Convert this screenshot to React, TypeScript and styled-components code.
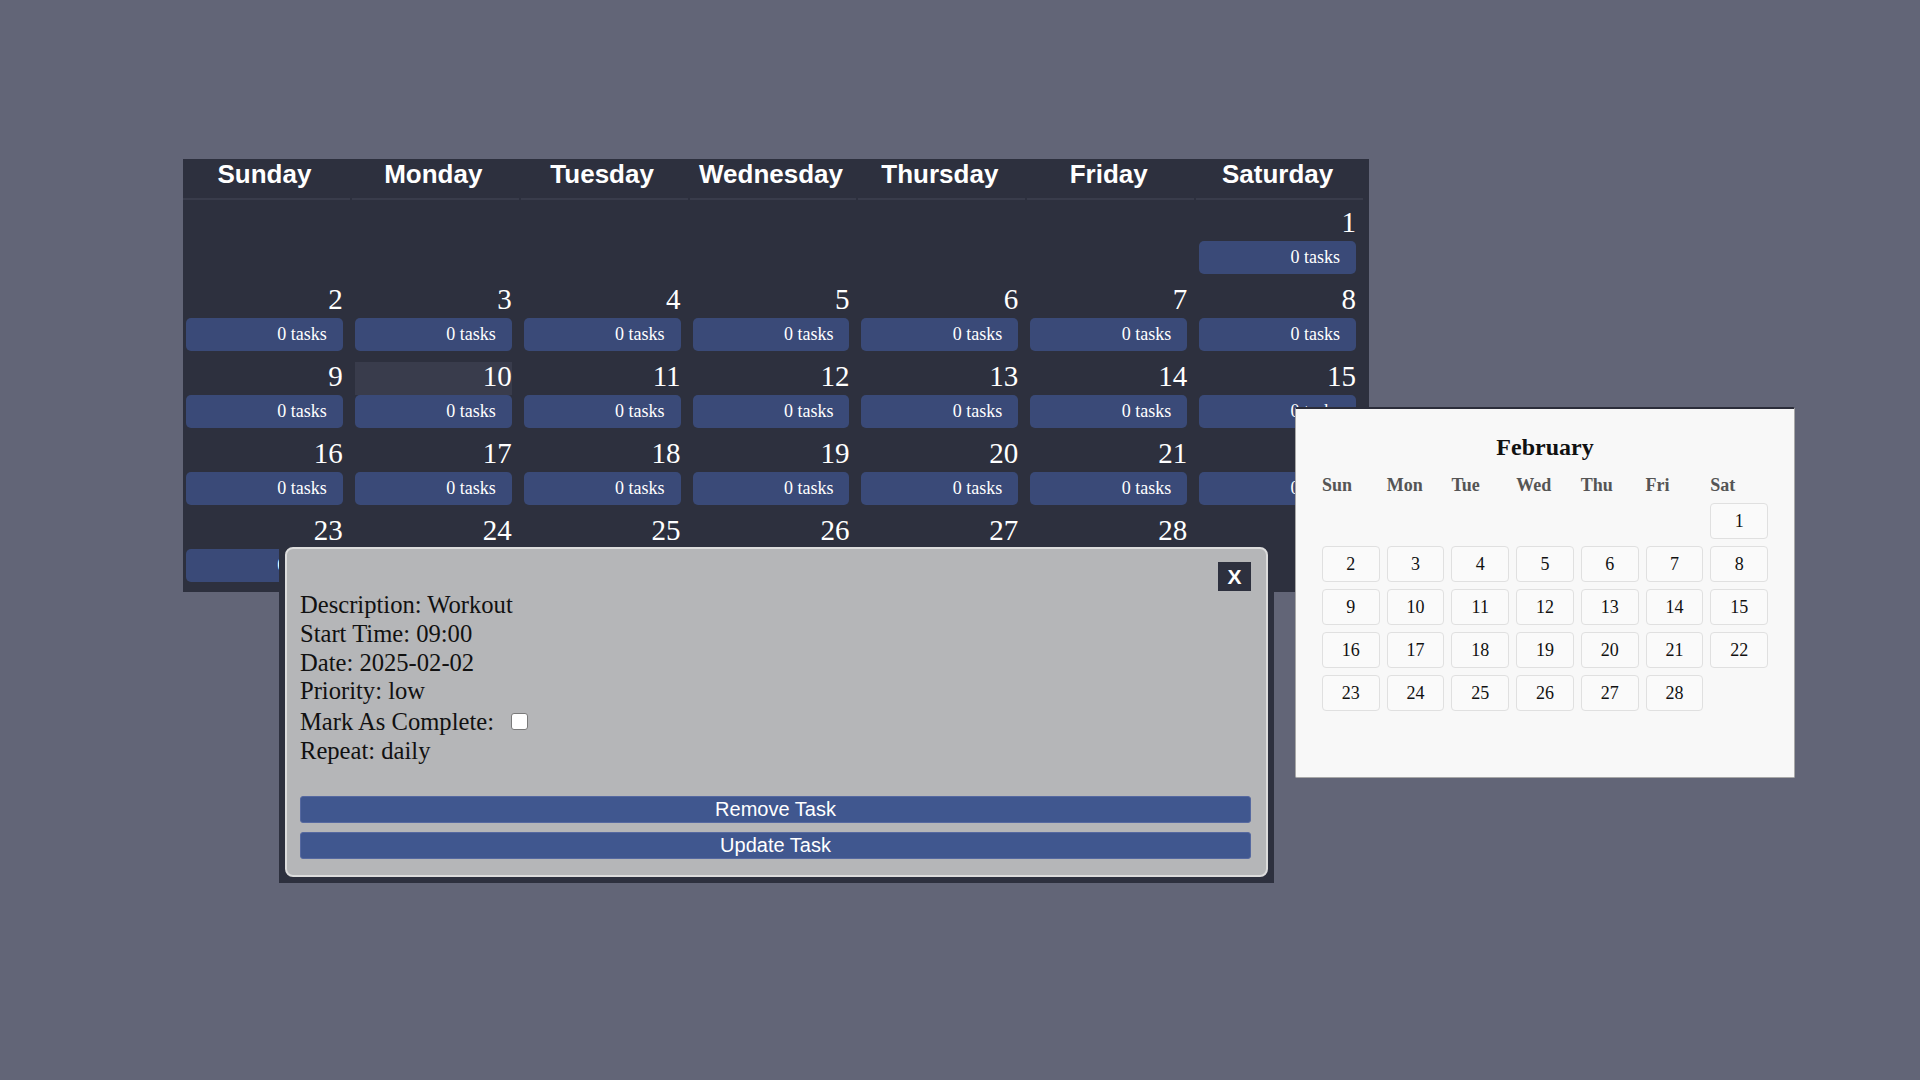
import React from 'react';
import styled, { createGlobalStyle } from 'styled-components';

const GlobalStyle = createGlobalStyle`
  html, body {
    margin: 0;
    padding: 0;
    background: #626577;
  }
  body {
    font-family: "Liberation Serif", "Times New Roman", serif;
  }
  * { box-sizing: border-box; }
`;

const Page = styled.div`
  min-height: 1080px;
  padding: 159px 0 0 183px;
`;

const Stage = styled.div`
  position: relative;
  width: 1186px;
`;

const CalendarGrid = styled.div`
  background: #2d303e;
  display: grid;
  grid-template-columns: repeat(7, 1fr);
  column-gap: 2px;
  padding: 0 6px 7px 0;
`;

const HeaderCell = styled.div`
  font-family: "Liberation Sans", Arial, sans-serif;
  font-weight: bold;
  font-size: 26px;
  line-height: 30px;
  color: #ffffff;
  text-align: center;
  padding: 0 7px 9px 3px;
  border-bottom: 2px solid #393c4b;
`;

const DayCell = styled.div`
  padding: 8px 7px 3px 3px;
  min-height: 77px;
`;

const DayNumber = styled.div<{ $today?: boolean }>`
  font-size: 29px;
  line-height: 29px;
  padding-bottom: 4px;
  color: #ffffff;
  text-align: right;
  background: ${(p) => (p.$today ? '#393c4c' : 'transparent')};
`;

const TaskButton = styled.button`
  display: block;
  width: 100%;
  padding: 6px 16px;
  border: none;
  border-radius: 5px;
  background: #3a4a78;
  color: #ffffff;
  font-family: "Liberation Serif", "Times New Roman", serif;
  font-size: 18px;
  line-height: 21px;
  text-align: right;
  cursor: pointer;
`;

const ModalFrame = styled.div`
  position: absolute;
  left: 96px;
  top: 382px;
  width: 995px;
  padding: 6px 6px 6px 6px;
  background: #2d303e;
  z-index: 2;
`;

const ModalBox = styled.div`
  background: #b5b6b8;
  border: 2px solid #dcdcdc;
  border-radius: 8px;
  padding: 13px 15px 16px 13px;
  display: flex;
  flex-direction: column;
`;

const CloseRow = styled.div`
  display: flex;
  justify-content: flex-end;
`;

const CloseButton = styled.button`
  width: 33px;
  height: 29px;
  padding: 0;
  border: none;
  background: #2d303e;
  color: #ffffff;
  font-family: "Liberation Sans", Arial, sans-serif;
  font-weight: bold;
  font-size: 21px;
  line-height: 29px;
  cursor: pointer;
`;

const InfoLine = styled.div`
  font-size: 24.6px;
  line-height: 28.75px;
  color: #111111;
`;

const CheckLine = styled(InfoLine)`
  display: flex;
  align-items: center;
  height: 31px;
  padding-top: 1px;
`;

const CheckBox = styled.input`
  appearance: none;
  width: 17px;
  height: 17px;
  margin: 0 0 2px 17px;
  background: #ffffff;
  border: 1px solid #7a7a7a;
  border-radius: 3px;
`;

const Actions = styled.div`
  margin-top: 30px;
  display: flex;
  flex-direction: column;
  gap: 9px;
`;

const ActionButton = styled.button`
  display: block;
  width: 100%;
  height: 27px;
  padding: 0;
  border: 1px solid #5669a0;
  border-radius: 3px;
  background: #40578f;
  color: #ffffff;
  font-family: "Liberation Sans", Arial, sans-serif;
  font-size: 20px;
  line-height: 25px;
  text-align: center;
  cursor: pointer;
`;

const Picker = styled.div`
  position: absolute;
  left: 1112px;
  top: 248px;
  width: 500px;
  height: 371px;
  background: #f8f8f8;
  border: 1px solid #a8a8a8;
  border-top: 2px solid #2b2d3a;
  border-radius: 2px;
  padding: 24px 26px 0 26px;
  z-index: 2;
`;

const PickerTitle = styled.div`
  font-weight: bold;
  font-size: 24px;
  line-height: 28px;
  text-align: center;
  color: #111111;
`;

const PickerGrid = styled.div`
  display: grid;
  grid-template-columns: repeat(7, 1fr);
  column-gap: 7px;
  row-gap: 7px;
`;

const WeekRow = styled(PickerGrid)`
  margin-top: 14px;
  margin-bottom: 7px;
`;

const WeekLabel = styled.div`
  font-weight: bold;
  font-size: 18px;
  line-height: 21px;
  color: #555555;
  text-align: left;
`;

const PickerDay = styled.div<{ $empty?: boolean }>`
  height: 36px;
  border: 1px solid ${(p) => (p.$empty ? 'transparent' : '#e0e0e0')};
  border-radius: 4px;
  background: ${(p) => (p.$empty ? 'transparent' : '#fafafa')};
  font-size: 18px;
  line-height: 34px;
  text-align: center;
  color: #111111;
`;

const WEEKDAYS = ['Sunday', 'Monday', 'Tuesday', 'Wednesday', 'Thursday', 'Friday', 'Saturday'];
const SHORT = ['Sun', 'Mon', 'Tue', 'Wed', 'Thu', 'Fri', 'Sat'];
const LEAD = 6;
const DAYS = 28;

const cells: (number | null)[] = [
  ...Array.from({ length: LEAD }, () => null),
  ...Array.from({ length: DAYS }, (_, i) => i + 1),
];
while (cells.length % 7 !== 0) cells.push(null);

export default function App() {
  return (
    <>
      <GlobalStyle />
      <Page>
        <Stage>
          <CalendarGrid>
            {WEEKDAYS.map((d) => (
              <HeaderCell key={d}>{d}</HeaderCell>
            ))}
            {cells.map((day, i) => (
              <DayCell key={i}>
                {day !== null && (
                  <>
                    <DayNumber $today={day === 10}>{day}</DayNumber>
                    <TaskButton>0 tasks</TaskButton>
                  </>
                )}
              </DayCell>
            ))}
          </CalendarGrid>

          <ModalFrame>
            <ModalBox>
              <CloseRow>
                <CloseButton>X</CloseButton>
              </CloseRow>
              <InfoLine>Description: Workout</InfoLine>
              <InfoLine>Start Time: 09:00</InfoLine>
              <InfoLine>Date: 2025-02-02</InfoLine>
              <InfoLine>Priority: low</InfoLine>
              <CheckLine>
                Mark As Complete:
                <CheckBox type="checkbox" />
              </CheckLine>
              <InfoLine>Repeat: daily</InfoLine>
              <Actions>
                <ActionButton>Remove Task</ActionButton>
                <ActionButton>Update Task</ActionButton>
              </Actions>
            </ModalBox>
          </ModalFrame>

          <Picker>
            <PickerTitle>February</PickerTitle>
            <WeekRow>
              {SHORT.map((d) => (
                <WeekLabel key={d}>{d}</WeekLabel>
              ))}
            </WeekRow>
            <PickerGrid>
              {cells.map((day, i) => (
                <PickerDay key={i} $empty={day === null}>
                  {day ?? ''}
                </PickerDay>
              ))}
            </PickerGrid>
          </Picker>
        </Stage>
      </Page>
    </>
  );
}
